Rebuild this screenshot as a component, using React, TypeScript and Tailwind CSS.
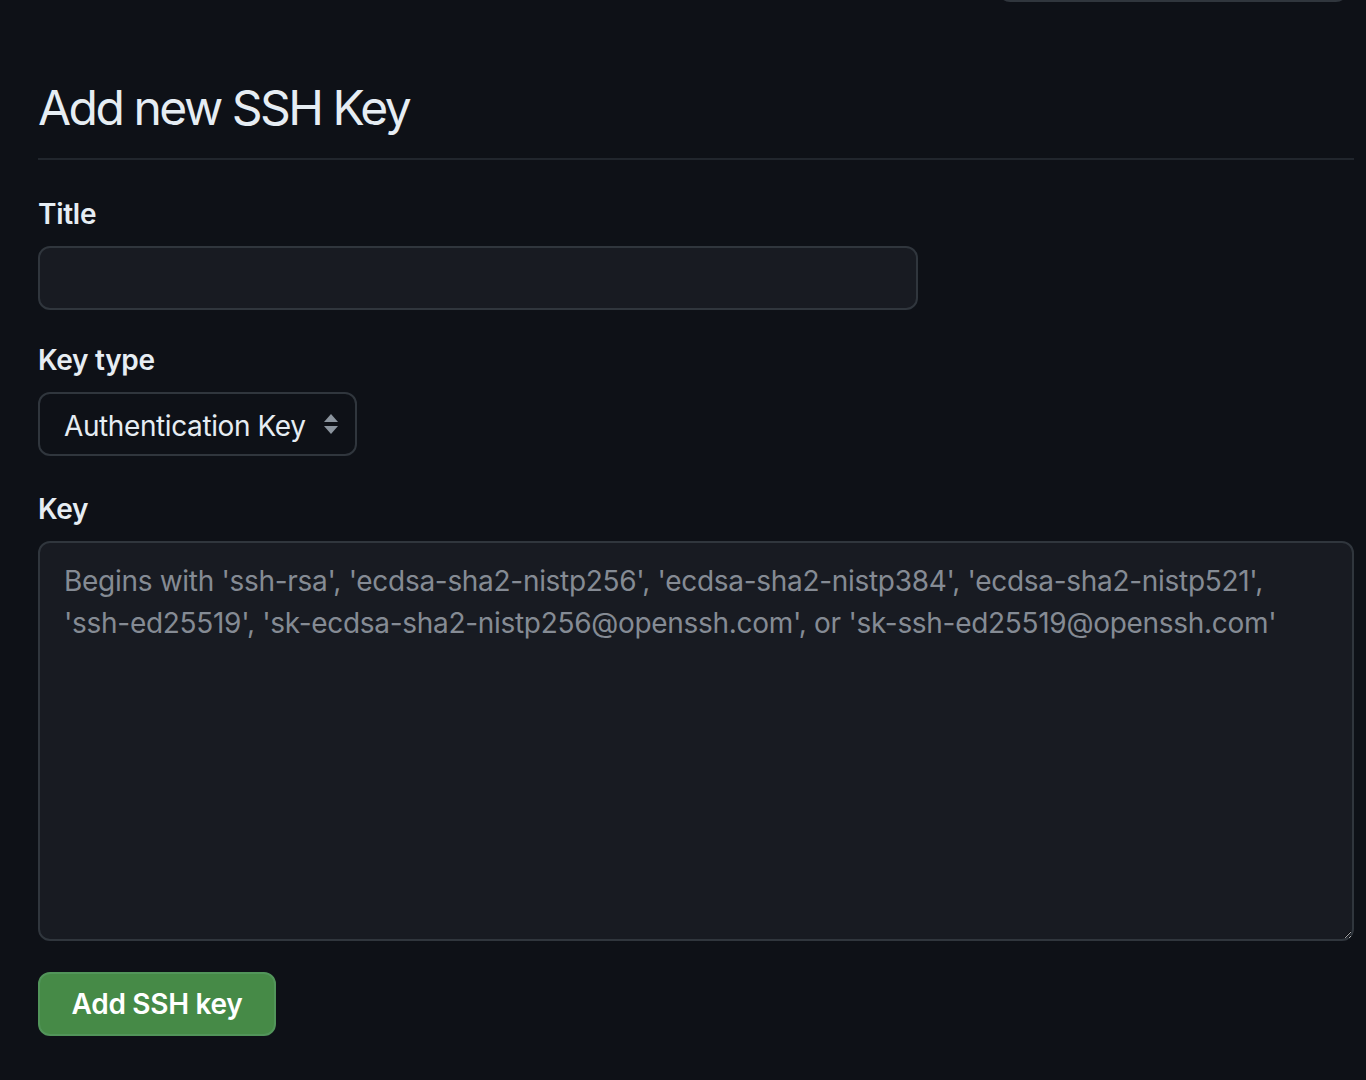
import React from 'react';

const App: React.FC = () => {
  return (
    <div className="min-h-screen bg-[#0e1117] text-[#e6edf3] font-['Inter','Noto_Sans',sans-serif]">
      {/* bottom edge of the box above */}
      <div className="flex justify-end pr-[18px]">
        <div className="w-[350px] h-[12px] -mt-[10px] border-x-2 border-b-2 border-[#30363d] rounded-b-[12px]" />
      </div>

      <div className="pl-[38px] pr-[12px]">
        <h1 className="pt-[76px] pb-[20px] text-[48px] leading-[60px] font-normal tracking-[-2.5px] border-b-2 border-[#21262d]">
          Add new SSH Key
        </h1>

        <form className="pt-[30px]" onSubmit={(e) => e.preventDefault()}>
          <label className="block text-[28px] leading-[48px] font-semibold tracking-[-0.3px]">Title</label>
          <input
            type="text"
            className="mt-[8px] block w-[880px] h-[64px] rounded-[12px] border-2 border-[#30363d] bg-[#181b22] px-[24px] text-[28px] outline-none"
          />

          <label className="block mt-[26px] text-[28px] leading-[48px] font-semibold tracking-[-0.3px]">Key type</label>
          <div className="mt-[8px] flex items-center w-[319px] h-[64px] rounded-[12px] border-2 border-[#30363d] bg-[#0e1117] pl-[24px] pr-[16px]">
            <span className="flex-1 pt-[3px] text-[28px] leading-none tracking-[-0.4px]">Authentication Key</span>
            <svg width="16" height="24" viewBox="0 0 16 24" className="fill-[#8b949e]">
              <path d="M8 2 L15 10 L1 10 Z" />
              <path d="M8 22 L15 14 L1 14 Z" />
            </svg>
          </div>

          <label className="block mt-[29px] text-[28px] leading-[48px] font-semibold tracking-[-0.3px]">Key</label>
          <textarea
            className="mt-[8px] block w-[1316px] h-[400px] rounded-[12px] border-2 border-[#30363d] bg-[#181b22] px-[24px] py-[17px] text-[28px] leading-[42px] tracking-[-0.3px] outline-none placeholder:text-[#858b94] resize-y"
            placeholder="Begins with 'ssh-rsa', 'ecdsa-sha2-nistp256', 'ecdsa-sha2-nistp384', 'ecdsa-sha2-nistp521', 'ssh-ed25519', 'sk-ecdsa-sha2-nistp256@openssh.com', or 'sk-ssh-ed25519@openssh.com'"
          />

          <button
            type="submit"
            className="mt-[31px] w-[238px] h-[64px] rounded-[12px] bg-[#468a47] border-2 border-[#52955a] text-white text-[28px] font-semibold tracking-[-0.3px]"
          >
            Add SSH key
          </button>
        </form>
      </div>
    </div>
  );
};

export default App;
